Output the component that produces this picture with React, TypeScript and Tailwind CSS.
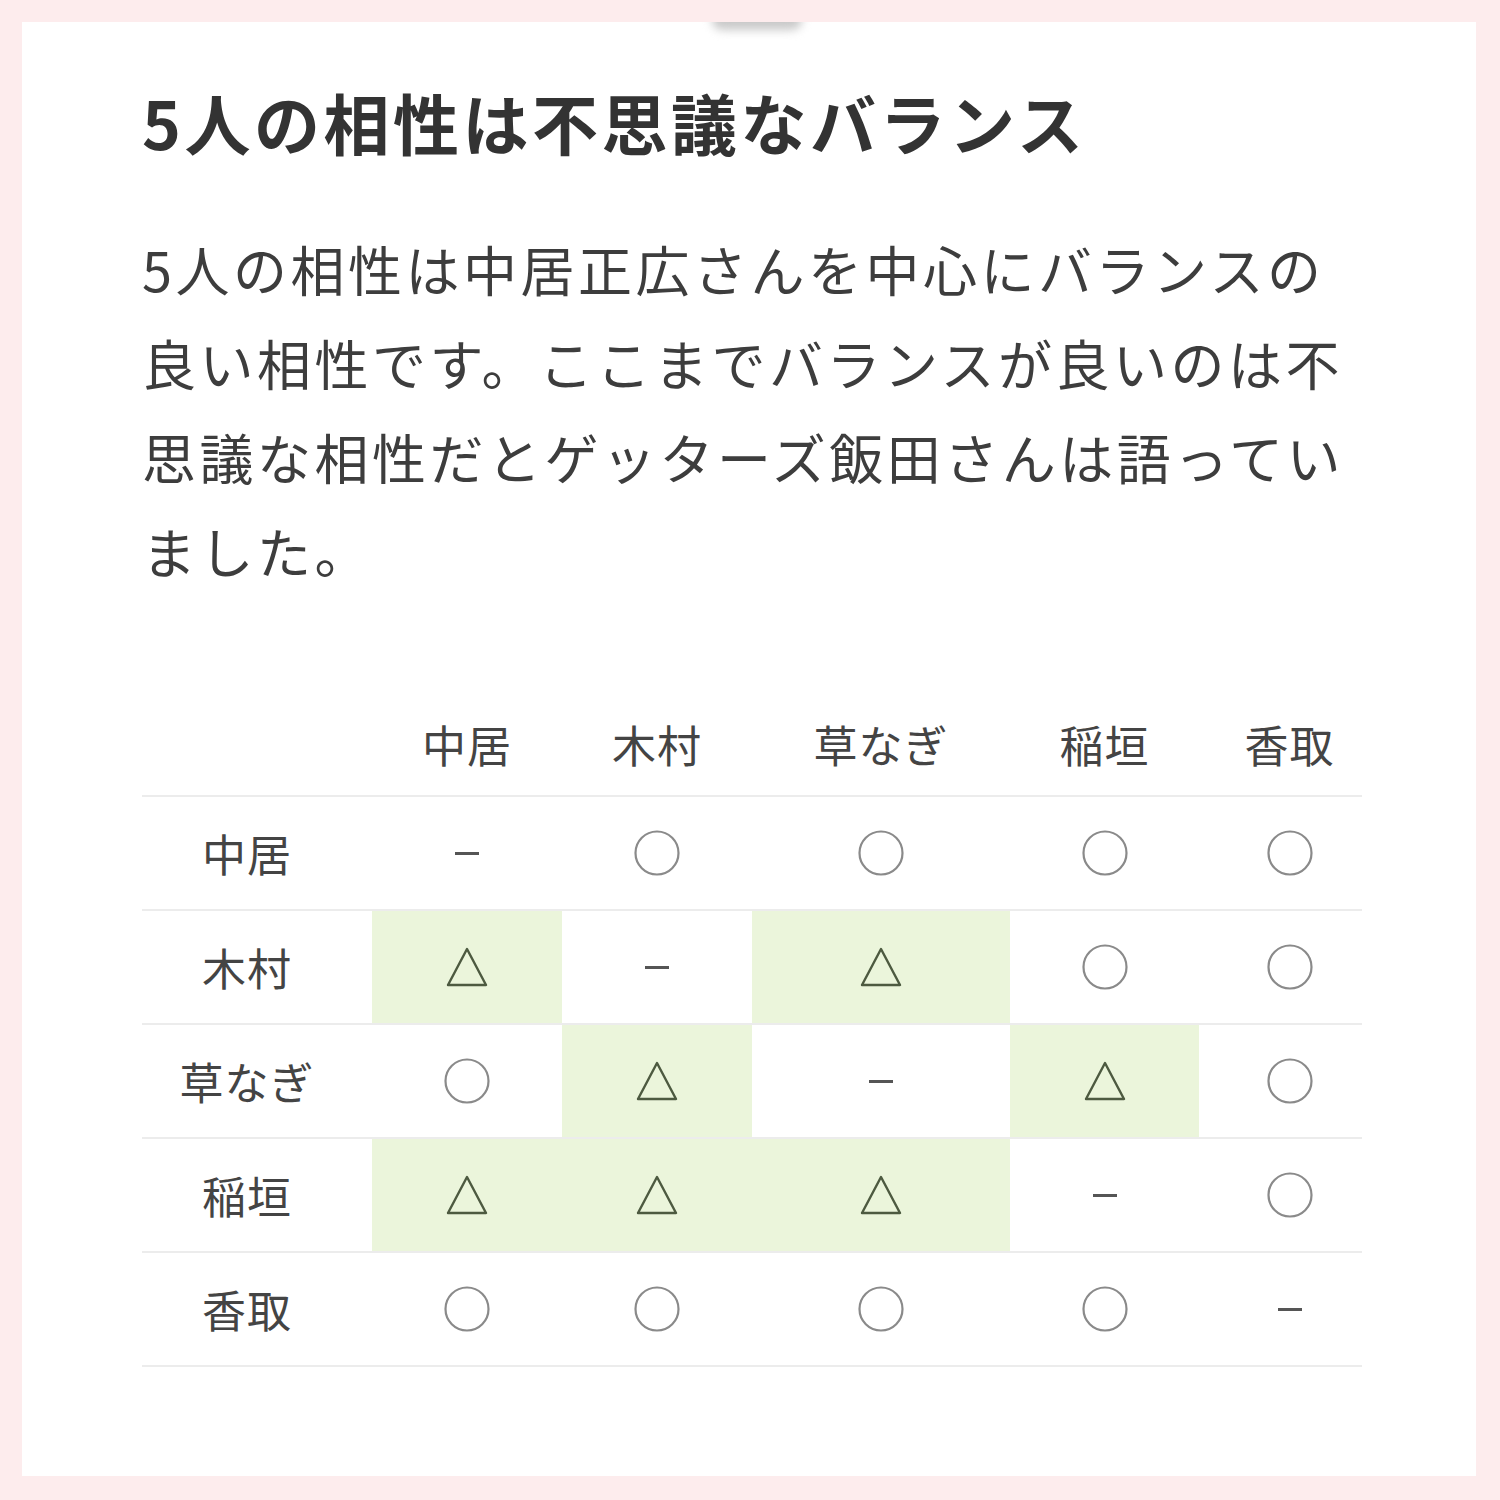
import React from 'react'

type Mark = 'o' | 't' | '-'

const names = ['中居', '木村', '草なぎ', '稲垣', '香取']

// rows of the compatibility table
const rows: { name: string; cells: Mark[] }[] = [
  { name: '中居', cells: ['-', 'o', 'o', 'o', 'o'] },
  { name: '木村', cells: ['t', '-', 't', 'o', 'o'] },
  { name: '草なぎ', cells: ['o', 't', '-', 't', 'o'] },
  { name: '稲垣', cells: ['t', 't', 't', '-', 'o'] },
  { name: '香取', cells: ['o', 'o', 'o', 'o', '-'] },
]

const colPad = ['', '', '', '', 'pl-[18px]']

function Symbol({ mark }: { mark: Mark }) {
  if (mark === 'o') {
    return (
      <svg width="48" height="48" viewBox="0 0 48 48">
        <circle cx="24" cy="24" r="21.5" fill="none" stroke="#8a8a8a" strokeWidth="2.2" />
      </svg>
    )
  }
  if (mark === 't') {
    return (
      <svg width="46" height="42" viewBox="0 0 46 42">
        <path d="M23 3 L42 39 L4 39 Z" fill="none" stroke="#4d5a40" strokeWidth="2.4" strokeLinejoin="round" />
      </svg>
    )
  }
  return <div className="w-[24px] h-[3px] bg-[#555]" />
}

export default function App() {
  const font = { fontFamily: '"Noto Sans CJK JP", "Noto Sans", sans-serif' }

  return (
    <div className="w-[1500px] h-[1500px] bg-[#fdeced] p-[22px] pr-[24px]" style={font}>
      <div className="relative h-[1454px] bg-white pl-[120px] pt-[59px] overflow-hidden">
        {/* shadow of the element above */}
        <div className="absolute left-[690px] top-[-12px] w-[90px] h-[20px] rounded-full bg-[#c9c9c9] blur-[5px]" />

        <h1 className="text-[66px] leading-[80px] font-bold text-[#333] tracking-[3.5px]">
          5人の相性は不思議なバランス
        </h1>

        <p className="mt-[61px] w-[1220px] text-[54px] leading-[94px] text-[#3d3d3d] tracking-[3.5px]">
          5人の相性は中居正広さんを中心にバランスの良い相性です。ここまでバランスが良いのは不思議な相性だとゲッターズ飯田さんは語っていました。
        </p>

        {/* compatibility table */}
        <div className="mt-[88px] w-[1220px] grid grid-cols-[230px_190px_190px_258px_189px_163px] text-[44px] text-[#444] tracking-[1px]">
          <div className="h-[111px] border-b-2 border-[#ececec]" />
          {names.map((n, i) => (
            <div
              key={n}
              className={`h-[111px] flex items-center justify-center pt-[6px] border-b-2 border-[#ececec] ${colPad[i]}`}
            >
              {n}
            </div>
          ))}

          {rows.map((r) => (
            <React.Fragment key={r.name}>
              <div className="h-[114px] flex items-center justify-center pr-[20px] border-b-2 border-[#ececec]">
                {r.name}
              </div>
              {r.cells.map((m, i) => (
                <div
                  key={i}
                  className={`h-[114px] flex items-center justify-center border-b-2 border-[#ececec] ${colPad[i]} ${
                    m === 't' ? 'bg-[#ebf5db]' : 'bg-white'
                  }`}
                >
                  <Symbol mark={m} />
                </div>
              ))}
            </React.Fragment>
          ))}
        </div>
      </div>
    </div>
  )
}
